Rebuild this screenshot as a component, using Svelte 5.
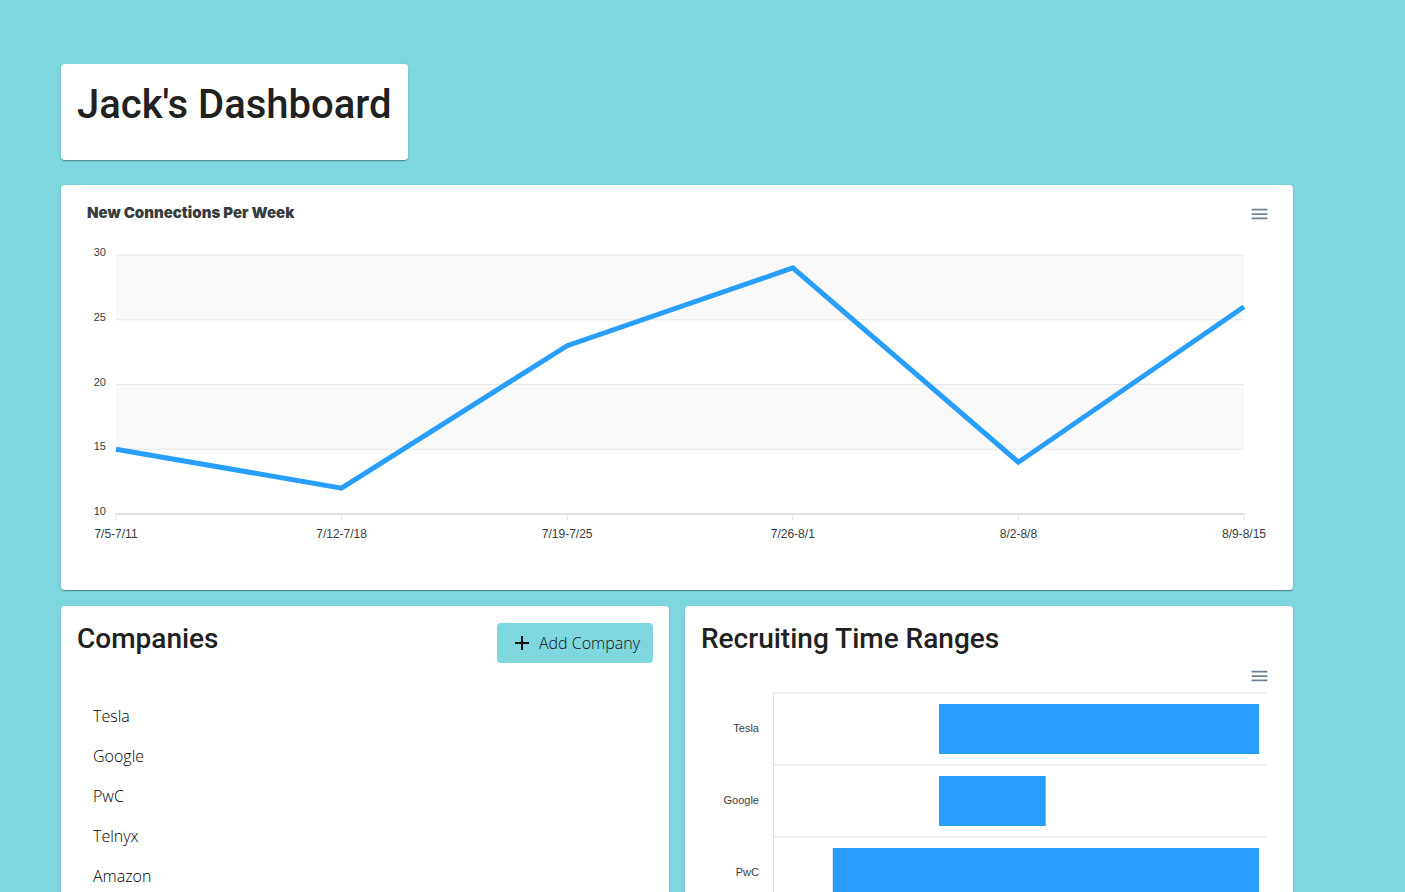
<script>
  let lineWidth = $state(1200);
  let rangeWidth = $state(576);

  const weeks = [
    { label: '7/5-7/11', value: 15 },
    { label: '7/12-7/18', value: 12 },
    { label: '7/19-7/25', value: 23 },
    { label: '7/26-8/1', value: 29 },
    { label: '8/2-8/8', value: 14 },
    { label: '8/9-8/15', value: 26 }
  ];
  const ticks = [30, 25, 20, 15, 10];
  const plot = { left: 39, right: 33, top: 30, height: 259 };

  const yOf = (value) => plot.top + ((30 - value) / 20) * plot.height;
  let step = $derived((lineWidth - plot.left - plot.right) / (weeks.length - 1));
  let points = $derived(weeks.map((w, i) => `${plot.left + i * step},${yOf(w.value)}`).join(' '));

  const companies = ['Tesla', 'Google', 'PwC', 'Telnyx', 'Amazon'];

  // start and end are fractions of the visible time axis
  const ranges = [
    { name: 'Tesla', start: 0.336, end: 0.984 },
    { name: 'Google', start: 0.336, end: 0.552 },
    { name: 'PwC', start: 0.121, end: 0.984 }
  ];
  const rowHeight = 72;
  const axisX = 72;
  let rangePlot = $derived(rangeWidth - axisX - 10);
</script>

{#snippet menuButton(label)}
  <button class="menu" type="button" aria-label={label}>
    <svg width="24" height="24" viewBox="0 0 24 24" aria-hidden="true">
      <path fill="#6e8192" d="M3 18h18v-2H3v2zm0-5h18v-2H3v2zm0-7v2h18V6H3z" />
    </svg>
  </button>
{/snippet}

<main>
  <header class="card heading">
    <h1>Jack's Dashboard</h1>
  </header>

  <section class="card">
    <div class="chart-head">
      <h2>New Connections Per Week</h2>
      {@render menuButton('Connections chart menu')}
    </div>
    <div class="line-chart" bind:clientWidth={lineWidth}>
      <svg width="100%" height="349" role="img" aria-label="New Connections Per Week">
        <rect x={plot.left} y={yOf(30)} width={step * 5} height={plot.height / 4} fill="#f9f9f9" />
        <rect x={plot.left} y={yOf(20)} width={step * 5} height={plot.height / 4} fill="#f9f9f9" />
        {#each ticks as tick}
          <line x1={plot.left} x2={lineWidth - plot.right} y1={yOf(tick)} y2={yOf(tick)} stroke="#e6e6e6" />
          <text class="y-label" x="29" y={yOf(tick) + 1} text-anchor="end">{tick}</text>
        {/each}
        <line x1={plot.left} x2={lineWidth - plot.right} y1={yOf(10)} y2={yOf(10)} stroke="#e0e0e0" stroke-width="2" />
        {#each weeks as week, i}
          <line x1={plot.left + i * step} x2={plot.left + i * step} y1={yOf(10)} y2={yOf(10) + 6} stroke="#e0e0e0" />
          <text class="x-label" x={plot.left + i * step} y={yOf(10) + 24} text-anchor="middle">{week.label}</text>
        {/each}
        <polyline {points} fill="none" stroke="#289fff" stroke-width="5" />
      </svg>
    </div>
  </section>

  <div class="columns">
    <section class="card">
      <div class="section-head">
        <h3>Companies</h3>
        <button class="add" type="button">
          <svg width="24" height="24" viewBox="0 0 24 24" aria-hidden="true">
            <path fill="currentColor" d="M19 13h-6v6h-2v-6H5v-2h6V5h2v6h6v2z" />
          </svg>
          Add Company
        </button>
      </div>
      <ul>
        {#each companies as company}
          <li>{company}</li>
        {/each}
      </ul>
    </section>

    <section class="card">
      <h3>Recruiting Time Ranges</h3>
      <div class="chart-head ranges-head">
        {@render menuButton('Recruiting chart menu')}
      </div>
      <div class="range-chart" bind:clientWidth={rangeWidth}>
        <svg width="100%" height="220" role="img" aria-label="Recruiting Time Ranges">
          {#each ranges as range, i}
            <line x1={axisX} x2={axisX + rangePlot} y1={1 + i * rowHeight} y2={1 + i * rowHeight} stroke="#efefef" stroke-width="2" />
            <text class="row-label" x="58" y={40 + i * rowHeight} text-anchor="end">{range.name}</text>
            <rect x={axisX + range.start * rangePlot} y={12 + i * rowHeight} width={(range.end - range.start) * rangePlot} height="50" fill="#289fff" />
          {/each}
          <line x1={axisX + 0.5} x2={axisX + 0.5} y1="1" y2={1 + ranges.length * rowHeight} stroke="#e0e0e0" />
        </svg>
      </div>
    </section>
  </div>
</main>

<style>
  :global(body) {
    margin: 0;
    background: #7ed6df;
    color: #212121;
    font-family: Roboto, "Liberation Sans", sans-serif;
  }

  main {
    display: flex;
    flex-direction: column;
    gap: 16px;
    padding: 64px 112px 0 61px;
  }

  .card {
    box-sizing: border-box;
    min-width: 0;
    padding: 16px;
    border-radius: 4px;
    background: #fff;
    box-shadow:
      0 2px 1px -1px rgba(0, 0, 0, 0.2),
      0 1px 1px 0 rgba(0, 0, 0, 0.14),
      0 1px 3px 0 rgba(0, 0, 0, 0.12);
  }

  .heading {
    align-self: flex-start;
    margin-bottom: 9px;
  }

  h1,
  h2,
  h3 {
    margin: 0;
    font-weight: 500;
  }

  h1 {
    padding-bottom: 14px;
    font-size: 40px;
    line-height: 50px;
  }

  h2 {
    color: #373d3f;
    font: 900 15px/24px Inter, "Liberation Sans", sans-serif;
  }

  h3 {
    font-size: 28px;
    line-height: 34px;
  }

  .chart-head {
    display: flex;
    align-items: flex-start;
    justify-content: space-between;
    padding: 0 7px 0 10px;
  }

  .ranges-head {
    justify-content: flex-end;
    padding-top: 7px;
    margin-bottom: 4px;
  }

  .menu {
    display: flex;
    padding: 1px 0 0;
    border: 0;
    background: none;
    cursor: pointer;
  }

  .menu svg {
    width: 21px;
    height: 24px;
  }

  .line-chart svg,
  .range-chart svg {
    display: block;
  }

  .line-chart {
    margin-top: -1px;
  }

  text {
    fill: #373d3f;
    font-family: "Liberation Sans", Arial, sans-serif;
    font-size: 11px;
  }

  .x-label {
    font-size: 12px;
  }

  .columns {
    display: grid;
    grid-template-columns: 1fr 1fr;
    gap: 16px;
  }

  .section-head {
    display: flex;
    align-items: flex-start;
    justify-content: space-between;
  }

  .add {
    display: flex;
    align-items: center;
    gap: 5px;
    height: 40px;
    margin-top: 1px;
    padding: 0 13px;
    border: 0;
    border-radius: 4px;
    background: #7ed6df;
    color: #111;
    font: 300 16px/24px "Open Sans", sans-serif;
    cursor: pointer;
  }

  ul {
    margin: 33px 0 0;
    padding: 0 16px;
    list-style: none;
    color: #000;
    font: 300 16px/40px "Open Sans", sans-serif;
  }
</style>
